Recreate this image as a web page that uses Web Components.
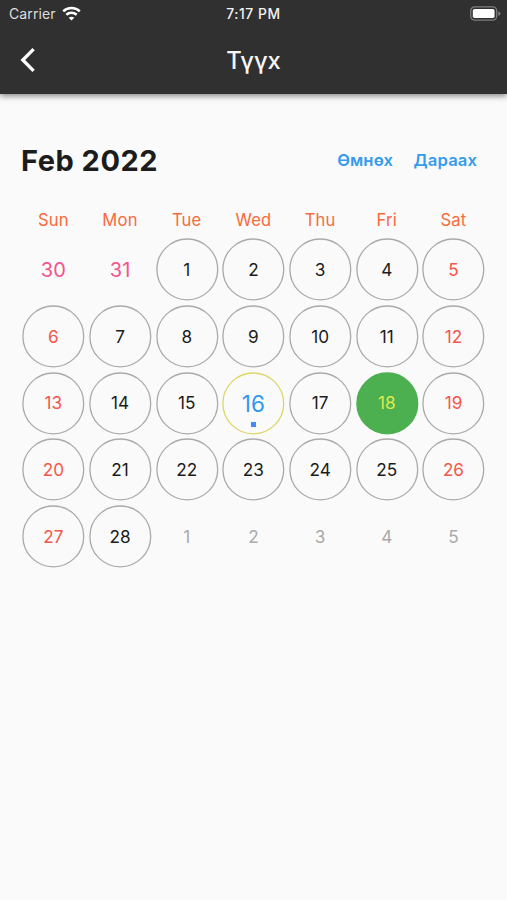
<!DOCTYPE html>
<html lang="mn">
<head>
<meta charset="utf-8">
<title>Түүх</title>
<style>
html, body { margin: 0; height: 100%; background: #fafafa; }
body { font-family: Inter, Roboto, "Liberation Sans", sans-serif; overflow: hidden; }
</style>
</head>
<body>
<history-screen></history-screen>
<script>
function define(name, html, setup) {
  const template = document.createElement('template');
  template.innerHTML = html;
  customElements.define(name, class extends HTMLElement {
    connectedCallback() {
      if (this.shadowRoot) return;
      this.attachShadow({ mode: 'open' }).append(template.content.cloneNode(true));
      if (setup) setup(this, this.shadowRoot);
    }
  });
}

define('status-bar', `
<style>
:host { display: grid; grid-template-columns: 1fr auto 1fr; align-items: center; height: 27px; padding: 0 6px 0 9px; color: #fff; font-size: 14px; }
.left { display: flex; align-items: center; gap: 6px; color: #dedede; letter-spacing: .12px; }
.time { font-size: 13.8px; font-weight: 550; letter-spacing: .6px; color: #f2f2f2; margin-left: -3px; }
.battery { justify-self: end; }
svg { display: block; margin-top: -1px; }
</style>
<div class="left"><span>Carrier</span>
<svg width="19" height="15" viewBox="0 0 19 15" fill="none" stroke="#fff" stroke-width="2.5"><path d="M1.2 5.3C5.8.9 13.2.9 17.8 5.3"/><path d="M4.3 8.700c3-2.7 7.4-2.7 10.4 0"/><path d="M9.500 14.600 6.700 11.700C8.300 10.300 10.700 10.300 12.300 11.700Z" fill="#fff" stroke="none"/></svg></div>
<div class="time">7:17 PM</div>
<svg class="battery" width="31" height="15" viewBox="0 0 31 15"><rect x=".7" y=".9" width="26" height="13.200" rx="4" fill="none" stroke="#7d7d7d" stroke-width="1.300"/><rect x="2.800" y="3" width="21.800" height="9" rx="1.800" fill="#fff"/><path d="M28.300 5.200q2.200.8 2.200 2.400t-2.200 2.400z" fill="#7d7d7d"/></svg>`);

define('app-bar', `
<style>
:host { display: grid; grid-template-columns: 1fr auto 1fr; align-items: center; height: 66px; padding: 0 20px; color: #fff; }
h1 { margin: 2px 0 0; font-size: 23.800px; line-height: 30px; font-weight: 500; color: #f6f6f6; }
svg { display: block; margin-top: -1px; }
</style>
<svg width="16" height="26" viewBox="0 0 16 26" fill="none" stroke="#fff" stroke-width="3.300"><path d="M13.600 2.200 2.800 13l10.800 10.800"/></svg>
<h1><slot></slot></h1><span></span>`);

define('month-header', `
<style>
:host { display: flex; align-items: center; justify-content: space-between; height: 40px; padding: 0 30px 0 21px; }
h2 { margin: 2px 0 0; font-size: 29px; line-height: 36px; font-weight: 650; letter-spacing: .5px; color: #1c1c1c; }
nav { display: flex; gap: 20.500px; color: #359bec; font-size: 16.600px; font-weight: 560; letter-spacing: .12px; }
</style>
<h2><slot></slot></h2>
<nav><slot name="action"></slot></nav>`);

define('calendar-day', `
<style>
:host { display: grid; place-items: center; height: 66.700px; font-size: 17.200px; color: #1c1c1c; --ring: #aaa; --fill: none; }
.cell { width: 64px; height: 64px; display: grid; place-items: center; position: relative; }
.cell > * { grid-area: 1 / 1; }
svg { display: block; }
circle { stroke: var(--ring); fill: var(--fill); stroke-width: 1.300; }
:host([kind="weekend"]) { color: #f4564b; }
:host([kind="previous"]) { color: #f2548c; font-size: 20px; --ring: none; }
:host([kind="next"]) { color: #aaa; --ring: none; }
:host([kind="today"]) { color: #dfe94a; --ring: #4caf50; --fill: #4caf50; }
:host([kind="marked"]) { color: #2f98ee; font-size: 22.500px; --ring: #ddd568; }
:host([kind="marked"]) span, :host([kind="previous"]) span { padding-top: 1px; }
:host([kind="marked"]) .cell::after { content: ""; position: absolute; width: 5px; height: 5px; background: #448aff; left: 30px; bottom: 8px; }
</style>
<div class="cell"><svg width="64" height="64" viewBox="0 0 64 64"><circle cx="32.300" cy="32.400" r="30.400"/></svg><span><slot></slot></span></div>`);

define('month-grid', `
<style>
:host { display: block; padding: 0 20px; }
.week { display: grid; grid-template-columns: repeat(7, 66.700px); }
.names { height: 33px; align-items: center; text-align: center; font-size: 16.600px; color: #f86a3e; letter-spacing: .2px; }
</style>
<div class="week names"></div>
<div class="week days"></div>`, (host, root) => {
  for (const name of ['Sun','Mon','Tue','Wed','Thu','Fri','Sat']) {
    const label = document.createElement('span');
    label.textContent = name;
    root.querySelector('.names').append(label);
  }
  for (let i = 0; i < 35; i++) {
    const cell = document.createElement('calendar-day');
    const day = i - 1;
    cell.textContent = day < 1 ? day + 31 : day > 28 ? day - 28 : day;
    const kind = day < 1 ? 'previous' : day > 28 ? 'next' : day === 16 ? 'marked' : day === 18 ? 'today' : i % 7 === 0 || i % 7 === 6 ? 'weekend' : 'normal';
    cell.setAttribute('kind', kind);
    root.querySelector('.days').append(cell);
  }
});

define('history-screen', `
<style>
:host { display: flex; flex-direction: column; height: 100vh; background: #fafafa; }
header { background: #303030; height: 93.500px; box-shadow: 0 2px 6px rgba(0,0,0,.48); }
main { padding-top: 46.500px; }
month-grid { margin-top: 23px; }
</style>
<header><status-bar></status-bar><app-bar>Түүх</app-bar></header>
<main>
<month-header>Feb 2022<span slot="action">Өмнөх</span><span slot="action">Дараах</span></month-header>
<month-grid></month-grid>
</main>`);
</script>
</body>
</html>
